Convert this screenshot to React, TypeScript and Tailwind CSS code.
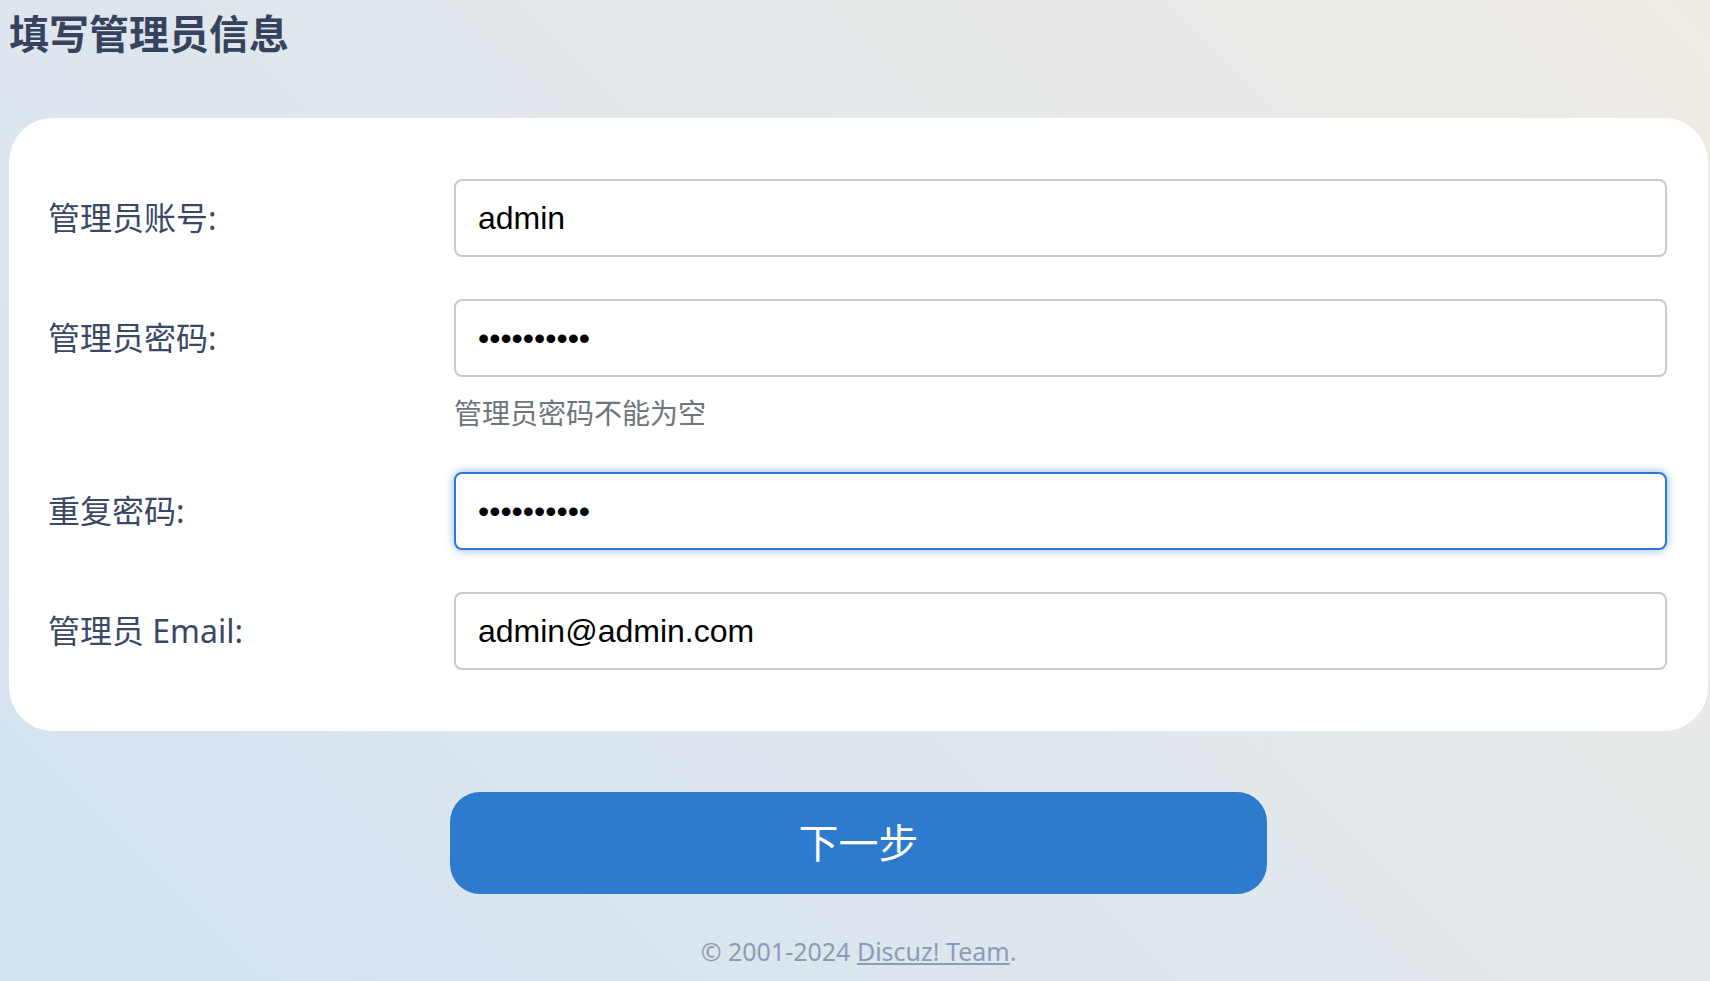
import React from 'react'

const cjk = "font-['Noto_Sans','Noto_Sans_CJK_SC',sans-serif]"

interface Field {
  id: string
  label: string
  type: string
  value: string
  focused?: boolean
  hint?: string
}

const fields: Field[] = [
  { id: 'username', label: '管理员账号:', type: 'text', value: 'admin' },
  {
    id: 'password',
    label: '管理员密码:',
    type: 'password',
    value: '1234567890',
    hint: '管理员密码不能为空',
  },
  { id: 'password2', label: '重复密码:', type: 'password', value: '1234567890', focused: true },
  { id: 'email', label: '管理员 Email:', type: 'text', value: 'admin@admin.com' },
]

function FormRow({ field }: { field: Field }) {
  return (
    <div>
      <div className="flex items-center">
        <label
          htmlFor={field.id}
          className={`w-[406px] shrink-0 text-[32px] leading-[40px] text-[#3a4863] ${cjk}`}
        >
          {field.label}
        </label>
        <input
          id={field.id}
          type={field.type}
          defaultValue={field.value}
          readOnly
          className={`h-[78px] flex-1 rounded-[8px] border-2 bg-white px-[22px] font-['Liberation_Sans',Arial,sans-serif] text-[32px] text-black outline-none ${
            field.focused
              ? 'border-[#2d78d0] shadow-[0_0_10px_rgba(45,120,208,0.55)]'
              : 'border-[#cbcbcb]'
          }`}
        />
      </div>
      {field.hint && (
        <div
          className={`ml-[406px] mt-[19px] h-[34px] text-[28px] leading-[34px] text-[#6e757c] ${cjk}`}
        >
          {field.hint}
        </div>
      )}
    </div>
  )
}

export default function App() {
  return (
    <div className="min-h-screen bg-[linear-gradient(45deg,#d3e2f1_0%,#e2e8ec_55%,#efebe4_100%)] pl-[9px] pr-[2px]">
      <h1
        className={`pt-[10px] text-[40px] font-bold leading-[48px] text-[#37435c] ${cjk}`}
      >
        填写管理员信息
      </h1>

      <div className="mt-[60px] flex flex-col gap-[42px] rounded-[44px] bg-white pb-[61px] pl-[39px] pr-[41px] pt-[61px]">
        {fields.map((f) => (
          <FormRow key={f.id} field={f} />
        ))}
      </div>

      <button
        className={`mx-auto mt-[61px] flex h-[102px] w-[817px] items-center justify-center rounded-[30px] bg-[#2d7bcf] text-[40px] text-white ${cjk}`}
      >
        下一步
      </button>

      <p className={`mt-[39px] text-center text-[25px] leading-[36px] text-[#8c9bb5] ${cjk}`}>
        © 2001-2024{' '}
        <a href="#" className="underline">
          Discuz! Team
        </a>
        .
      </p>
    </div>
  )
}
